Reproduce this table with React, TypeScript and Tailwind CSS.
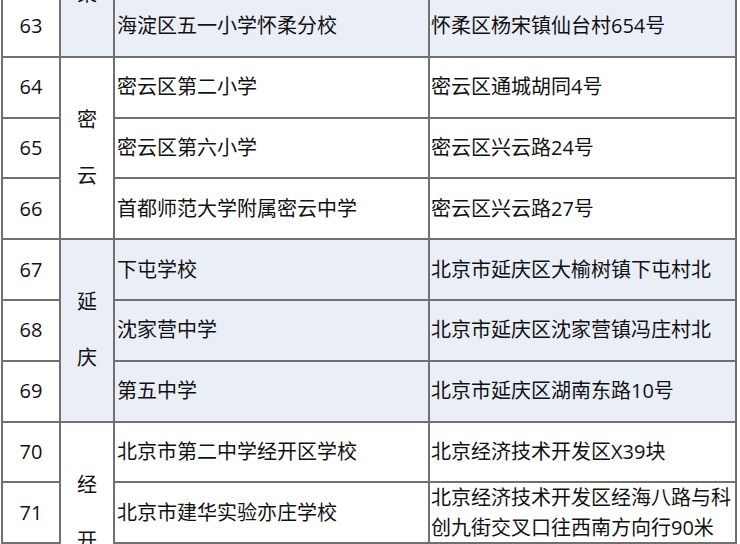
type Row = { no: number; school: string; addr: string };
type Group = { name: string[]; shaded: boolean; rows: Row[] };

const groups: Group[] = [
  {
    name: ['怀', '柔'],
    shaded: true,
    rows: [
      { no: 61, school: '', addr: '' },
      { no: 62, school: '', addr: '' },
      { no: 63, school: '海淀区五一小学怀柔分校', addr: '怀柔区杨宋镇仙台村654号' },
    ],
  },
  {
    name: ['密', '云'],
    shaded: false,
    rows: [
      { no: 64, school: '密云区第二小学', addr: '密云区通城胡同4号' },
      { no: 65, school: '密云区第六小学', addr: '密云区兴云路24号' },
      { no: 66, school: '首都师范大学附属密云中学', addr: '密云区兴云路27号' },
    ],
  },
  {
    name: ['延', '庆'],
    shaded: true,
    rows: [
      { no: 67, school: '下屯学校', addr: '北京市延庆区大榆树镇下屯村北' },
      { no: 68, school: '沈家营中学', addr: '北京市延庆区沈家营镇冯庄村北' },
      { no: 69, school: '第五中学', addr: '北京市延庆区湖南东路10号' },
    ],
  },
  {
    name: ['经', '开'],
    shaded: false,
    rows: [
      { no: 70, school: '北京市第二中学经开区学校', addr: '北京经济技术开发区X39块' },
      { no: 71, school: '北京市建华实验亦庄学校', addr: '北京经济技术开发区经海八路与科创九街交叉口往西南方向行90米' },
      { no: 72, school: '', addr: '' },
    ],
  },
];

export default function App() {
  return (
    <div className="h-[544px] w-[740px] overflow-hidden bg-white font-['Open_Sans','Noto_Sans_CJK_SC',sans-serif] text-[20px] text-[#111]">
      <div className="ml-px -mt-[126.6px] grid w-[736px] grid-cols-[56px_52px_313px_305px] auto-rows-[58.8px] gap-[2px] bg-[#707070] p-[2px]">
        {groups.map((g) =>
          g.rows.map((r, i) => {
            const bg = g.shaded ? 'bg-[#e9eef7]' : 'bg-white';
            return [
              <div key={`n${r.no}`} className="flex items-center justify-center bg-white">
                {r.no}
              </div>,
              i === 0 ? (
                <div key={`d${r.no}`} className={`row-span-3 flex flex-col items-center justify-center ${bg}`}>
                  {g.name.map((c) => (
                    <span key={c} className="leading-[56px]">
                      {c}
                    </span>
                  ))}
                </div>
              ) : null,
              <div key={`s${r.no}`} className={`flex items-center pl-[2px] ${bg}`}>
                {r.school}
              </div>,
              <div key={`a${r.no}`} className={`flex items-center pl-px leading-[30px] ${bg}`}>
                {r.addr}
              </div>,
            ];
          })
        )}
      </div>
    </div>
  );
}
